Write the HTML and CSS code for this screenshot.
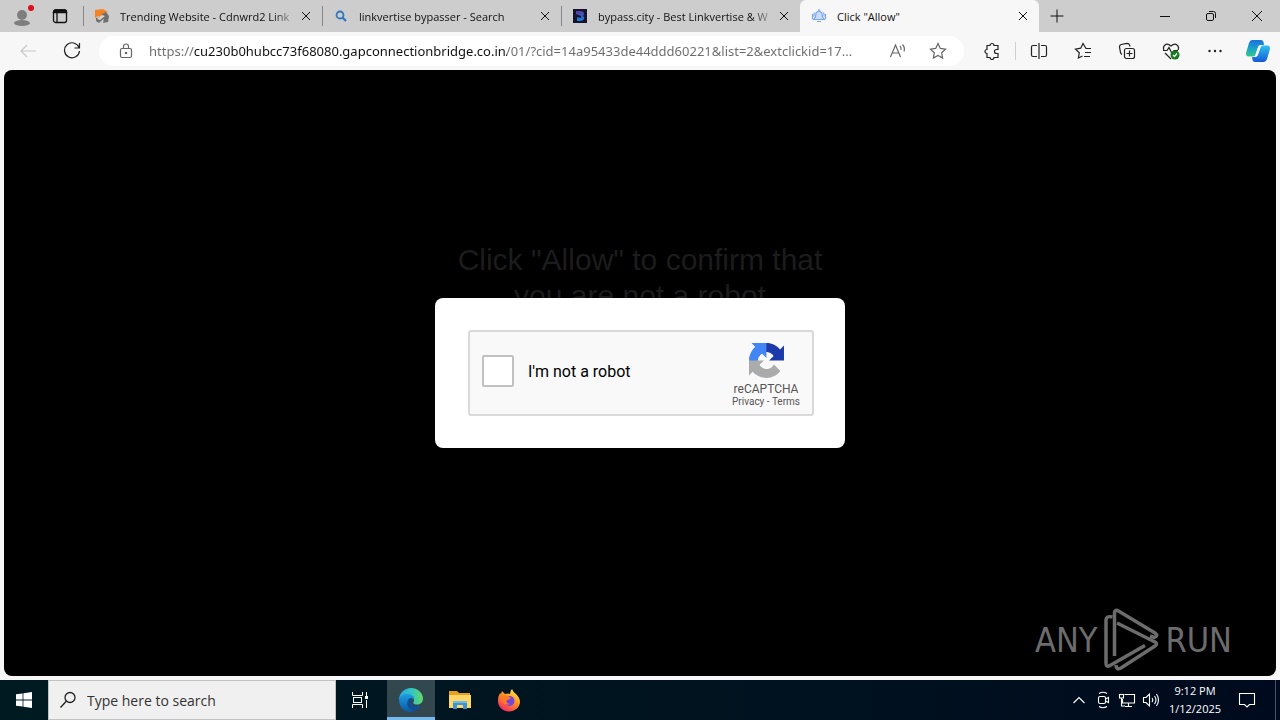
FILE: index.html
```html
<!DOCTYPE html>
<html lang="en">
<head>
<meta charset="utf-8">
<title>Click "Allow"</title>
<link rel="stylesheet" href="styles.css">
</head>
<body>
<header class="tabbar">
  <button class="profile" aria-label="Profile">
    <svg width="22" height="24" viewBox="0 0 22 24"><circle cx="9" cy="13" r="5" fill="#7e7e7e"/><ellipse cx="9" cy="21" rx="8" ry="3" fill="#7e7e7e"/><circle cx="18" cy="6" r="3" fill="#e00b1c"/></svg>
  </button>
  <button class="workspace" aria-label="Tab actions">
    <svg width="16" height="16" viewBox="0 0 16 16" fill="none" stroke="#111" stroke-width="1.3"><rect x="1.5" y="2" width="13" height="12.500" rx="2"/><path d="M1.500 4.500V4a2 2 0 0 1 2-2h9a2 2 0 0 1 2 2v.5z" fill="#111"/><path d="M5 5v9"/></svg>
  </button>
  <div class="tabs">
    <div class="tab">
      <svg class="favicon" viewBox="0 0 16 16"><path d="M1 2l8-1 5 3-5 2-1 4-4-2-3 2z" fill="#f58220"/><path d="M2 10l5-1 1-3 4-2 3 4-1 6-5 1 1-4-3 2-2 2-3-2z" fill="#6f6f6f"/><path d="M3 11l5-4 3 1-5 4z" fill="#d9d4cf"/></svg>
      <button class="tab-title faded">Trending Website - Cdnwrd2 Link</button>
      <button class="close" aria-label="Close tab"><svg width="10" height="10" viewBox="0 0 10 10"><path d="M1 1l8 8M9 1L1 9"/></svg></button>
    </div>
    <div class="tab">
      <svg class="favicon" viewBox="0 0 16 16" fill="none" stroke="#2e76bd" stroke-width="1.800"><circle cx="7" cy="7" r="3.500"/><path d="M9.500 9.500L13 13" stroke-width="2.200"/></svg>
      <button class="tab-title faded">linkvertise bypasser - Search</button>
      <button class="close" aria-label="Close tab"><svg width="10" height="10" viewBox="0 0 10 10"><path d="M1 1l8 8M9 1L1 9"/></svg></button>
    </div>
    <div class="tab">
      <svg class="favicon" viewBox="0 0 16 16"><defs><linearGradient id="bc" x1="0" y1="0" x2="0" y2="1"><stop offset="0" stop-color="#5b36a8"/><stop offset="1" stop-color="#1683e0"/></linearGradient></defs><rect x="1" y="1" width="14" height="14" fill="#14152a"/><path d="M4 3h5q3 0 3 3 0 1-1 2 2 1 1 3-1 2-4 2H5V9l4 1V8L4 6z" fill="url(#bc)"/></svg>
      <button class="tab-title faded">bypass.city - Best Linkvertise &amp; W</button>
      <button class="close" aria-label="Close tab"><svg width="10" height="10" viewBox="0 0 10 10"><path d="M1 1l8 8M9 1L1 9"/></svg></button>
    </div>
    <div class="tab active">
      <svg class="favicon" viewBox="0 0 16 16" fill="none" stroke="#7ba6ec" stroke-width="1.200"><path d="M8 2.500l3 2.500 .5 4 2 2.500h-11l2-2.500L5 5z" fill="#c9dcfb"/><path d="M6 13.500h4M1.500 6v5M14.500 6v5M3.500 4.500q-1 2-.5 4M12.500 4.500q1 2 .5 4M8 1v1.500"/></svg>
      <button class="tab-title">Click "Allow"</button>
      <button class="close" aria-label="Close tab"><svg width="10" height="10" viewBox="0 0 10 10"><path d="M1 1l8 8M9 1L1 9"/></svg></button>
    </div>
  </div>
  <button class="new-tab" aria-label="New tab"><svg width="14" height="14" viewBox="0 0 14 14"><path d="M7 .5v13M.5 7h13"/></svg></button>
  <div class="window-controls">
    <button aria-label="Minimize"><svg width="12" height="12" viewBox="0 0 12 12"><path d="M1 6.500h10"/></svg></button>
    <button aria-label="Restore"><svg width="12" height="12" viewBox="0 0 12 12"><rect x="1.500" y="3.500" width="7" height="7" rx="1.500"/><path d="M4 1.500h4.500q2 0 2 2V8"/></svg></button>
    <button aria-label="Close"><svg width="12" height="12" viewBox="0 0 12 12"><path d="M1 1l10 10M11 1L1 11"/></svg></button>
  </div>
</header>

<nav class="toolbar">
  <button class="tool back" aria-label="Back"><svg width="18" height="18" viewBox="0 0 18 18"><path d="M17 9H2M8 3L2 9l6 6"/></svg></button>
  <button class="tool reload" aria-label="Refresh"><svg width="18" height="18" viewBox="0 0 18 18"><path d="M16 5.500A7.500 7.500 0 1 0 16.500 9M16.500 1v5h-5"/></svg></button>
  <div class="address">
    <button class="tool lock" aria-label="Site information"><svg width="14" height="16" viewBox="0 0 14 16"><rect x="1.500" y="5.500" width="11" height="9" rx="1.500"/><path d="M4.500 5.500V3.500a2.500 2.500 0 0 1 5 0v2"/><circle cx="7" cy="10" r=".7" fill="#666"/></svg></button>
    <input class="url" type="text" aria-label="Address" value="https://cu230b0hubcc73f68080.gapconnectionbridge.co.in/01/?cid=14a95433de44ddd60221&amp;list=2&amp;extclickid=17...">
    <button class="tool aloud" aria-label="Read aloud"><svg width="18" height="16" viewBox="0 0 18 16"><path d="M1.500 14L6.500 2l5 12M3.200 10h6.600M11 3q1.500 1.500 1 4M13.500 1.500q2.800 3 1.500 7"/></svg></button>
    <button class="tool" aria-label="Add to favorites"><svg width="18" height="18" viewBox="0 0 18 18"><path d="M9 1.500l2.300 4.900 5.200.7-3.800 3.700.9 5.300L9 13.500l-4.600 2.600.9-5.300L1.500 7.100l5.200-.7z" stroke="#666"/></svg></button>
  </div>
  <div class="tools">
    <button class="tool" aria-label="Extensions"><svg width="18" height="18" viewBox="0 0 18 18"><path d="M4 3.500h3a2 2 0 0 1 4 0h4v4h-1.500a1.800 1.800 0 0 0 0 4H15v4h-4a2 2 0 0 1-4 0H4v-4a2 2 0 0 1 0-4z"/></svg></button>
    <span class="divider"></span>
    <button class="tool" aria-label="Split screen"><svg width="18" height="18" viewBox="0 0 18 18"><path d="M7 3.500H3q-1.500 0-1.500 1.500v8q0 1.500 1.500 1.500h4M11 3.500h4q1.500 0 1.500 1.500v8q0 1.500-1.500 1.500h-4M9 1v16"/></svg></button>
    <button class="tool" aria-label="Favorites"><svg width="18" height="18" viewBox="0 0 18 18"><path d="M17 6.500h-5L9 1.500 6.700 6.200l-5.200.9 3.800 3.700-.9 5.200 4.100-2M11 10.500h6M10 14.500h6"/></svg></button>
    <button class="tool" aria-label="Collections"><svg width="18" height="18" viewBox="0 0 18 18"><rect x="6.500" y="6.500" width="10" height="10" rx="2"/><path d="M11.500 8.500v6M8.500 11.500h6M4 12.500q-1-.5-1.500-2L1.500 5q0-2 1.500-2.500l6-1.200q2 0 2.500 1.700l.5 1.500"/></svg></button>
    <button class="tool" aria-label="Browser essentials"><svg width="18" height="18" viewBox="0 0 18 18"><path d="M2 8q-1.500-3 1-5t6 1q3.500-3 6-1t1 5M1 8.500h4l2-3 3 6 2-3h4M3 11l6 6"/><circle cx="13" cy="13" r="4.500" fill="#167a1c" stroke="none"/><path d="M11 13l1.500 1.500L15 11.500" stroke="#fff"/></svg></button>
    <button class="tool" aria-label="Settings and more"><svg width="18" height="18" viewBox="0 0 18 18"><g fill="#222" stroke="none"><circle cx="3.500" cy="9" r="1.200"/><circle cx="9" cy="9" r="1.200"/><circle cx="14.500" cy="9" r="1.200"/></g></svg></button>
    <button class="tool copilot" aria-label="Copilot"><svg width="26" height="26" viewBox="0 0 26 26"><defs><linearGradient id="ca" x1="0" y1="0" x2="0" y2="1"><stop offset="0" stop-color="#1b6fe0"/><stop offset=".5" stop-color="#19a3c9"/><stop offset="1" stop-color="#35c98b"/></linearGradient><linearGradient id="cb" x1="0" y1="0" x2="0" y2="1"><stop offset="0" stop-color="#2fc3ee"/><stop offset="1" stop-color="#1559d6"/></linearGradient></defs><g stroke="none"><path d="M7 2h9q2 0 2.500 2L19 7h-3q-2 0-2.700 2L10.500 17q-.5 1.500-2.500 1.500H4q-4 0-2.700-4.500L4 5q1-3 3-3z" fill="url(#ca)"/><path d="M19 24h-9q-2 0-2.500-2L7 19h3q2 0 2.700-2L15.500 9q.5-1.500 2.500-1.500h4q4 0 2.700 4.500L22 21q-1 3-3 3z" fill="url(#cb)"/><path d="M14 7.500h3q-1 .5-1.700 2.500l-2 6q-.8 2.500-2.500 2.500H8.500q1.500-.5 2-2l2.300-7q.4-1.500 1.200-2z" fill="#f7f7f7"/></g></svg></button>
  </div>
</nav>

<main class="page">
  <h1 class="prompt">Click "Allow" to confirm that<br>you are not a robot</h1>
  <div class="overlay">
    <section class="modal">
      <div class="captcha">
        <label class="check"><input type="checkbox"><span>I'm not a robot</span></label>
        <div class="brand">
          <svg width="35" height="35" viewBox="0 0 64 64"><path d="M64 31.955l-.033-1.370V4.687l-7.160 7.160C50.948 4.674 42.033.093 32.050.093c-10.400 0-19.622 4.960-25.458 12.640l11.736 11.860a15.550 15.550 0 0 1 4.754-5.334c2.050-1.600 4.952-2.906 8.968-2.906.485 0 .86.057 1.135.163 4.976.393 9.288 3.140 11.828 7.124l-8.307 8.307L64 31.953" fill="#1c3aa9"/><path d="M31.862.094l-1.370.033H4.594l7.160 7.160C4.580 13.147 0 22.060 0 32.046c0 10.400 4.960 19.622 12.640 25.458L24.500 45.768a15.550 15.550 0 0 1-5.334-4.754c-1.600-2.050-2.906-4.952-2.906-8.968 0-.485.057-.86.163-1.135.393-4.976 3.140-9.288 7.124-11.828l8.307 8.307L31.860.095" fill="#4285f4"/><path d="M.001 32.045l.033 1.370v25.898l7.160-7.160c5.860 7.173 14.774 11.754 24.760 11.754 10.400 0 19.622-4.960 25.458-12.640l-11.736-11.860a15.550 15.550 0 0 1-4.754 5.334c-2.050 1.600-4.952 2.906-8.968 2.906-.485 0-.86-.057-1.135-.163-4.976-.393-9.288-3.140-11.828-7.124l8.307-8.307c-10.522.040-22.400.066-27.295-.005" fill="#ababab"/></svg>
          <span class="brand-name">reCAPTCHA</span>
          <span class="legal"><a href="#">Privacy</a> - <a href="#">Terms</a></span>
        </div>
      </div>
    </section>
  </div>
  <div class="watermark">
    <span>ANY</span>
    <svg width="56" height="64" viewBox="0 0 56 64" fill="none" stroke="#6c6c6c" stroke-width="3.500"><path d="M9.500 9Q3 7.500 3 12v43q0 5 4 2.500L42 37.500"/><path d="M11.500 48V5q0-4 4-2L52 25q4 3-1 4.500L47 28"/><path d="M14 15l38 19q3 2 0 4L18 60q-5 2.500-5-3"/></svg>
    <span>RUN</span>
  </div>
</main>

<footer class="taskbar">
  <button class="task" aria-label="Start"><svg width="16" height="16" viewBox="0 0 16 16" fill="#fff"><path d="M0 2.300L6.600 1.400v6.200H0zM7.400 1.300L16 0v7.600H7.400zM0 8.400h6.600v6.200L0 13.700zM7.400 8.400H16V16l-8.600-1.300z"/></svg></button>
  <label class="search">
    <svg width="18" height="18" viewBox="0 0 18 18" fill="none" stroke="#222" stroke-width="1.300"><circle cx="11" cy="6.500" r="5"/><path d="M7.500 10L1.500 16.500"/></svg>
    <input type="text" placeholder="Type here to search" aria-label="Search">
  </label>
  <button class="task" aria-label="Task view"><svg width="18" height="18" viewBox="0 0 18 18" fill="none" stroke="#fff"><path d="M1.500 1v3.500h10V1M1.500 17v-3.500h10V17M15.500 1v4M15.500 9v8"/><rect x="2.500" y="6.500" width="8" height="5" stroke="#fff"/><rect x="14.500" y="5.500" width="2" height="2" fill="#fff"/></svg></button>
  <button class="task running" aria-label="Microsoft Edge"><svg width="26" height="26" viewBox="0 0 26 26"><defs><linearGradient id="ea" x1="0" y1="0" x2="1" y2="0"><stop offset="0" stop-color="#2ba7e0"/><stop offset=".5" stop-color="#2fc4c9"/><stop offset="1" stop-color="#62db62"/></linearGradient><linearGradient id="eb" x1="0" y1="0" x2="0" y2="1"><stop offset="0" stop-color="#1b9de2"/><stop offset="1" stop-color="#0c59a4"/></linearGradient></defs><path d="M1 13C1 6 6.500 1 13 1s12 5 12 10.500c0 4-3 6-6 6-3.500 0-4-1.500-3.500-2.500 2-3-1-6-4.500-6-5 0-9 2-10 4z" fill="url(#ea)"/><path d="M1 13c.5-4 4-6 8-6 5 0 8 3 7 6-1-2-3.500-3-5-1-3 4 0 9 7 10-2 2-4 3-6 3C6 25 1 20 1 13z" fill="url(#eb)"/><path d="M11 12c-4 4-1 11 5 12 4-1 6-3 7-5.500-5 2-10 0-10-3 0-2 1-2.500 1-3.500q-1.500-1-3 0z" fill="#114f93"/></svg></button>
  <button class="task" aria-label="File Explorer"><svg width="22" height="20" viewBox="0 0 22 20"><path d="M0 1h8l2 2h11v4H0z" fill="#e8a11c"/><path d="M0 5h22v13H0z" fill="#ffd766"/><path d="M4 19v-8h14v8h-4v-4H8v4z" fill="#3994d6"/><path d="M4 11h14v2H4z" fill="#71b9e8"/></svg></button>
  <button class="task" aria-label="Firefox"><svg width="24" height="24" viewBox="0 0 24 24"><defs><linearGradient id="fa" x1=".8" y1="0" x2=".2" y2="1"><stop offset="0" stop-color="#fff04a"/><stop offset=".45" stop-color="#ff9022"/><stop offset="1" stop-color="#f5206a"/></linearGradient></defs><path d="M3 5l1 1 1-3 3 3q3-1 5 0 0-3 2-5 1 3 4 5 4 4 4 8c0 5-5 9.500-11 9.500S1 19 1 13q0-5 2-8z" fill="url(#fa)"/><circle cx="12.500" cy="13" r="5" fill="#7445dd"/><path d="M4 8q4-1 7 0l3 2q-2 2-4 2-2 3 3 4-6 2-8-3z" fill="#ff7b24"/></svg></button>
  <div class="tray">
    <button aria-label="Show hidden icons"><svg width="14" height="14" viewBox="0 0 14 14"><path d="M1.500 10L7 4.500l5.500 5.500"/></svg></button>
    <button aria-label="Meet now"><svg width="14" height="18" viewBox="0 0 14 18"><rect x="2.500" y="5.500" width="7" height="7" rx="1.500"/><path d="M9.500 8l3-1.500v5l-3-1.500M3 2.500q4-2.500 8 0M3 15.500q4 2.500 8 0"/></svg></button>
    <button aria-label="Network"><svg width="18" height="16" viewBox="0 0 18 16"><path d="M6.500 2.500h10v8.500H4.500V7M10.500 11v3.500M7 14.500h7"/><rect x="1.500" y="2.500" width="4" height="3.500"/><path d="M3.500 6v8H7"/></svg></button>
    <button aria-label="Volume"><svg width="18" height="16" viewBox="0 0 18 16"><path d="M1.500 5.500H4L7.500 2v12L4 10.500H1.500zM10 6q1.500 2 0 4M12.500 4q3 4 0 8M14.500 2q4 6 0 12"/></svg></button>
    <button class="clock"><span>9:12 PM</span><span>1/12/2025</span></button>
    <button class="notify" aria-label="Notifications"><svg width="18" height="18" viewBox="0 0 18 18"><path d="M1.500 2.500h15v11h-5L9 16l-2.500-2.500h-5z"/></svg></button>
    <button class="desktop" aria-label="Show desktop"></button>
  </div>
</footer>
</body>
</html>
```
FILE: styles.css
```css
* { box-sizing: border-box; }
html, body { height: 100%; margin: 0; }
body {
  display: flex;
  flex-direction: column;
  min-height: 100vh;
  background: #f7f7f7;
  color: #111;
  font-family: "Open Sans", "Noto Sans", sans-serif;
  font-size: 11px;
}
button {
  display: flex;
  align-items: center;
  justify-content: center;
  padding: 0;
  border: 0;
  background: none;
  color: inherit;
  font: inherit;
}
input { font: inherit; }
svg { flex: none; }

.tabbar { display: flex; height: 32px; background: #cdcdcd; }
.profile { width: 48px; }
.workspace { width: 35px; padding-right: 11px; }
.workspace svg, .profile svg { display: block; }
.profile svg { margin-bottom: 4px; }
.tabs { display: flex; flex: 0 1 956px; min-width: 0; }
.tab {
  display: flex;
  align-items: center;
  flex: 1 1 0;
  min-width: 0;
  padding: 0 8px 0 11px;
  position: relative;
}
.tab:not(.active)::before {
  content: "";
  position: absolute;
  left: 0;
  top: 6px;
  bottom: 6px;
  border-left: 1px solid #868686;
}
.active { background: #f7f7f7; border-radius: 6px 6px 0 0; }
.favicon { width: 16px; height: 16px; margin-right: 10px; }
.tab-title {
  flex: 1;
  min-width: 0;
  justify-content: flex-start;
  white-space: nowrap;
}
.faded { mask-image: linear-gradient(to right, #000 86%, transparent 100%); }
.close { width: 16px; height: 16px; }
.close svg, .new-tab svg, .window-controls svg { fill: none; stroke: #111; }
.new-tab { width: 35px; }
.window-controls { display: flex; margin-left: auto; }
.window-controls button { width: 46px; }

.toolbar { display: flex; align-items: center; height: 38px; background: #f7f7f7; }
.tool { width: 32px; height: 32px; flex: none; }
.tool svg { fill: none; stroke: #222; stroke-width: 1.2; }
.back { margin: 0 12px; }
.tool.back svg { stroke: #c8c8c8; }
.reload { margin-right: 11px; }
.address {
  display: flex;
  align-items: center;
  flex: 1;
  min-width: 0;
  height: 30px;
  padding: 0 10px 0 11px;
  border-radius: 15px;
  background: #fff;
}
.tool.lock svg, .tool.aloud svg { stroke: #666; }
.address .tool + .tool { margin-left: 8px; }
.url {
  flex: 1;
  min-width: 0;
  margin: 0 4px 0 7px;
  padding: 0;
  border: 0;
  outline: 0;
  font-family: "Noto Sans", sans-serif;
  font-size: 13px;
  color: #666;
  background: linear-gradient(to right, #6b6b6b 45px, #111 45px, #111 358px, #6b6b6b 358px);
  background-clip: text;
  -webkit-text-fill-color: transparent;
}
.tools { display: flex; align-items: center; gap: 12px; padding: 0 6px 0 12px; }
.divider { height: 18px; margin: 0 -5px; border-left: 1px solid #cfcfcf; }
.copilot { margin-left: -1px; }

.page {
  display: flex;
  flex: 1;
  flex-direction: column;
  align-items: center;
  position: relative;
  margin: 0 4px 4px;
  border-radius: 8px;
  overflow: hidden;
  background: #000;
}
.prompt {
  margin: 172px 0 0;
  color: #1c1c1c;
  font: 400 30px/36px "Liberation Sans", Arial, sans-serif;
  text-align: center;
}
.overlay { position: absolute; inset: 0; display: grid; place-items: center; }
.modal { width: 410px; padding: 32px 31px 32px 33px; border-radius: 8px; background: #fff; font-family: Roboto, sans-serif; }
.captcha {
  display: flex;
  align-items: center;
  justify-content: space-between;
  height: 86px;
  padding: 0 12px;
  border: 2px solid #d9d9d9;
  border-radius: 3px;
  background: #f9f9f9;
}
.check { display: flex; align-items: center; gap: 14px; padding-bottom: 4px; color: #000; font-size: 16px; }
.check input {
  appearance: none;
  width: 32px;
  height: 32px;
  margin: 0;
  border: 2px solid #c1c1c1;
  border-radius: 2px;
  background: #fff;
}
.brand { display: flex; flex-direction: column; align-items: center; padding-top: 4px; color: #555; }
.brand-name { margin-top: 4px; font-size: 12px; line-height: 14px; }
.legal { font-size: 10px; line-height: 11px; }
.legal a { color: inherit; text-decoration: none; }
.watermark {
  position: absolute;
  right: 44px;
  bottom: 4px;
  display: flex;
  align-items: center;
  gap: 6px;
  color: #6c6c6c;
  font: 34px/64px "DejaVu Sans Condensed", "DejaVu Sans", sans-serif;
}

.taskbar { display: flex; height: 40px; background: linear-gradient(to right, #001a22, #00131f 55%, #000a1e); }
.task { width: 48px; margin-right: 1px; }
.task:first-child { margin-right: 0; }
.search + .task { margin-right: 3px; }
.search {
  display: flex;
  align-items: center;
  gap: 10px;
  width: 288px;
  padding: 0 10px;
  border: 1px solid #c2c2c2;
  background: #f0f0f0;
}
.search input { flex: 1; min-width: 0; padding: 0; border: 0; outline: 0; background: none; font-size: 14px; }
.search input::placeholder { color: #333; }
.running { background: #33474f; border-bottom: 3px solid #76b9ed; padding-top: 3px; }
.tray { display: flex; margin-left: auto; color: #fff; }
.tray button { width: 24px; }
.tray svg { fill: none; stroke: #fff; stroke-width: 1.1; }
.tray .clock { flex-direction: column; width: 64px; line-height: 18px; }
.tray .notify { width: 40px; }
.tray .desktop { width: 5px; margin-left: 8px; border-left: 1px solid #4a5262; }
```
